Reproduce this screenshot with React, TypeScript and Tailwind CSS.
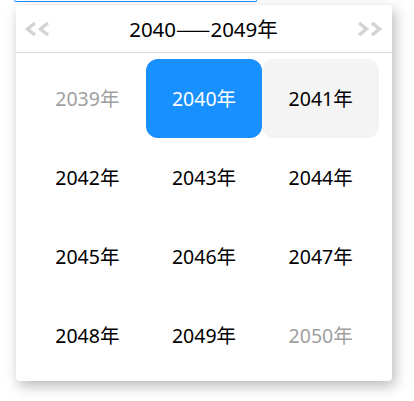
const years = [2039, 2040, 2041, 2042, 2043, 2044, 2045, 2046, 2047, 2048, 2049, 2050]

const Chevrons = ({ dir }: { dir: 'left' | 'right' }) => (
  <svg width="27" height="14" viewBox="0 0 27 14" className={dir === 'right' ? 'rotate-180' : ''}>
    <path d="M11 1 L3.5 7 L11 13" fill="none" stroke="#d4d4d4" strokeWidth="3.5" />
    <path d="M24 1 L16.5 7 L24 13" fill="none" stroke="#d4d4d4" strokeWidth="3.5" />
  </svg>
)

export default function App() {
  return (
    <div
      className="w-[414px] h-[401px] bg-white overflow-hidden"
      style={{ fontFamily: '"Noto Sans", "Noto Sans CJK SC", sans-serif' }}
    >
      <div className="ml-[14px] w-[243px] h-[2px] border-x border-b border-[#1890ff] rounded-b-[3px]" />
      <div className="ml-4 mt-[3px] w-[376px] bg-white rounded-[4px] shadow-[3px_5px_14px_rgba(0,0,0,0.28)]">
        <div className="h-[48px] flex items-center justify-between pl-2 pr-[9px] border-b border-[#dcdcdc]">
          <Chevrons dir="left" />
          <span className="text-[20.5px] text-black">
            2040<span style={{ fontFamily: '"Noto Sans CJK SC", sans-serif' }}>——</span>2049年
          </span>
          <Chevrons dir="right" />
        </div>
        <div className="grid grid-cols-3 px-[13px] pt-[6px] pb-[6px]">
          {years.map((y, i) => {
            const out = i === 0 || i === years.length - 1
            const active = y === 2040
            const hover = y === 2041
            return (
              <div
                key={y}
                className={`h-[79px] flex items-center justify-center rounded-[12px] text-[19.5px] ${
                  active ? 'bg-[#1890ff] text-white' : hover ? 'bg-[#f4f4f4] text-black' : out ? 'text-[#a0a0a0]' : 'text-black'
                }`}
              >
                {y}年
              </div>
            )
          })}
        </div>
      </div>
    </div>
  )
}
